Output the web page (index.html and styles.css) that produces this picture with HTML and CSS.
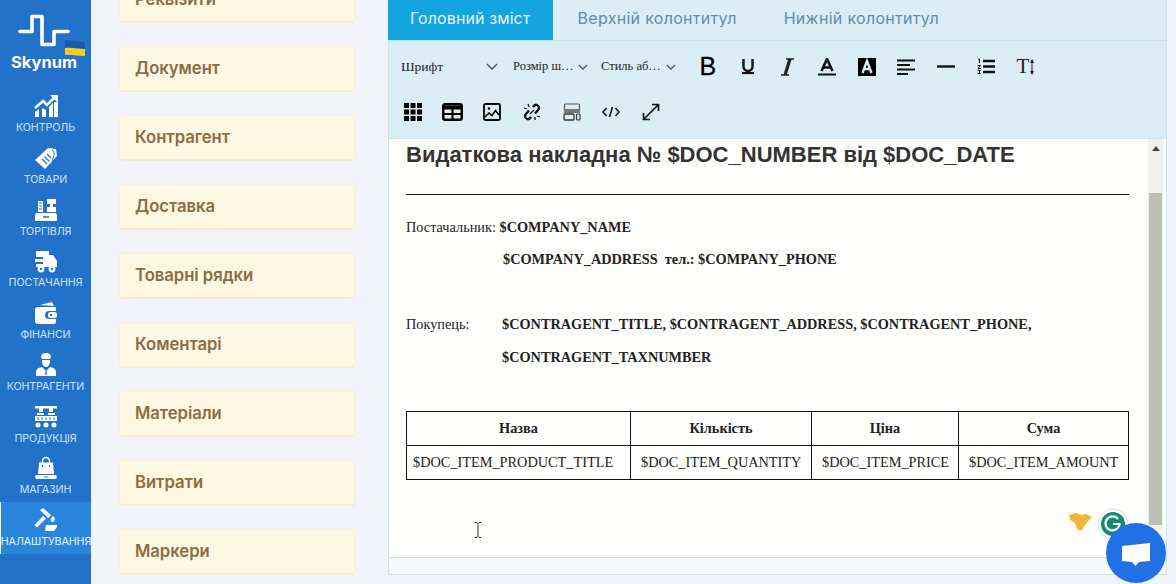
FILE: index.html
```html
<!DOCTYPE html>
<html lang="uk">
<head>
<meta charset="utf-8">
<title>Skynum</title>
<link rel="stylesheet" href="styles.css">
</head>
<body>
<div class="app">
  <nav class="sidebar">
    <div class="logo">
      <svg class="logo-mark" width="91" height="60" viewBox="0 0 91 60">
        <path d="M20 31.500H32V16.500H42V44.500H54V31.500H68" fill="none" stroke="#fff" stroke-width="3.600" stroke-linejoin="round" stroke-linecap="round"/>
        <path d="M65 41c6-1 13 1 20 1v7c-7 0-14-2-20-1z" fill="#1a5aa8"/>
        <path d="M65 48c6-1 13 1 20 1v7c-7 0-14-2-20-1z" fill="#f5d020"/>
      </svg>
      <span class="logo-text">Skynum</span>
    </div>
    <a class="nav-item">
      <svg width="26" height="24" viewBox="0 0 26 24" fill="#fff"><path d="M2 14 10 7l4 4 8-8" fill="none" stroke="#fff" stroke-width="2.600"/><path d="M17 1h8v8zM2 18l4-3v8H2zM9 14l4 2v7H9zM16 13l4-4v14h-4zM21 8h4v15h-4z"/></svg>
      <span>Контроль</span>
    </a>
    <a class="nav-item">
      <svg width="24" height="24" viewBox="0 0 24 24"><path d="M1 14 14 2l8 1 1 7-12 13z" fill="#fff"/><path d="M8 13l5 5M10.500 10.500l5 5M13 8l4 4" stroke="#2172c8" stroke-width="1.200"/><path d="M18 4q4 2 1 8l-1 8" fill="none" stroke="#2172c8" stroke-width="1"/></svg>
      <span>Товари</span>
    </a>
    <a class="nav-item">
      <svg width="24" height="24" viewBox="0 0 24 24" fill="#fff"><path d="M4 3h5v11H4zM13 1h9v5h-3v3h3v5h-9v-5h3V6h-3zM2 15h20l1 2v6H1v-6z"/><path d="M9 19h6" stroke="#2172c8" stroke-width="1.500"/><path d="M5 5h3M5 8h3M5 11h3" stroke="#2172c8"/></svg>
      <span>Торгівля</span>
    </a>
    <a class="nav-item">
      <svg width="24" height="24" viewBox="0 0 24 24" fill="#fff"><path d="M2 2h13v4h4l4 6v6H2v-3h7v-2H1v-3h8V8H2z"/><circle cx="7" cy="20" r="3.400"/><circle cx="18" cy="20" r="3.400"/><circle cx="7" cy="20" r="1.200" fill="#2172c8"/><circle cx="18" cy="20" r="1.200" fill="#2172c8"/></svg>
      <span>Постачання</span>
    </a>
    <a class="nav-item">
      <svg width="24" height="24" viewBox="0 0 24 24" fill="#fff"><path d="M6 4 18 1l2 4z"/><path d="M4 6h18v4h-7a4 4 0 0 0 0 8h7v3a2 2 0 0 1-2 2H4a3 3 0 0 1-3-3V9a3 3 0 0 1 3-3z"/><rect x="14" y="11" width="9" height="6" rx="2.500"/><circle cx="17" cy="14" r="1.200" fill="#2172c8"/></svg>
      <span>Фінанси</span>
    </a>
    <a class="nav-item">
      <svg width="24" height="24" viewBox="0 0 24 24" fill="#fff"><path d="M7 4q0-4 5-4t5 4l-1 2H8z"/><path d="M8 7h8v2q-1 5-4 5t-4-5z"/><path d="M2 23v-4q0-4 6-5l4 4 4-4q6 1 6 5v4z"/><path d="M12 18v4" stroke="#2172c8" stroke-width="1.400"/></svg>
      <span>Контрагенти</span>
    </a>
    <a class="nav-item">
      <svg width="24" height="24" viewBox="0 0 24 24" fill="#fff"><path d="M1 1h22v2.500H1zM5 3h4v4H5zM15 3h4v4h-4zM3 8h7v2H3zM14 8h7v2h-7zM1 11h22v5H1z"/><circle cx="4" cy="20" r="2.500"/><circle cx="12" cy="20" r="2.500"/><circle cx="20" cy="20" r="2.500"/><path d="M4 12v3M8 12v3M12 12v3M16 12v3M20 12v3" stroke="#2172c8"/></svg>
      <span>Продукція</span>
    </a>
    <a class="nav-item">
      <svg width="24" height="24" viewBox="0 0 24 24" fill="#fff"><path d="M8.500 8V5a3.500 3.500 0 0 1 7 0v3" fill="none" stroke="#fff" stroke-width="1.500"/><path d="M5 6.500h14l1 11.500H4z"/><path d="M2 19h20l1 2-1 2H2l-1-2z"/><path d="M10 21h4" stroke="#2172c8"/><path d="M8.500 9v2M15.500 9v2" stroke="#2172c8"/></svg>
      <span>Магазин</span>
    </a>
    <a class="nav-item active">
      <svg width="24" height="24" viewBox="0 0 24 24" fill="#fff"><path d="M6 2 9 0l8 7-3 3zM9 8l3 2.500-9 9-2.500-2.500z"/><path d="M19 8q3 3 1 5t-3 0 2-5zM12 17h11v2l-3 4h-9z"/></svg>
      <span>Налаштування</span>
    </a>
  </nav>

  <aside class="cards">
    <div class="card">Реквізити</div>
    <div class="card">Документ</div>
    <div class="card">Контрагент</div>
    <div class="card">Доставка</div>
    <div class="card">Товарні рядки</div>
    <div class="card">Коментарі</div>
    <div class="card">Матеріали</div>
    <div class="card">Витрати</div>
    <div class="card">Маркери</div>
  </aside>

  <main class="panel">
    <div class="tabs">
      <div class="tab tab-active">Головний зміст</div>
      <div class="tab">Верхній колонтитул</div>
      <div class="tab">Нижній колонтитул</div>
    </div>
    <div class="toolbar">
      <div class="tool-row">
        <div class="select select-wide"><span class="select-label">Шрифт</span><svg class="chev-big" viewBox="0 0 12 7"><path d="M1 1l5 5 5-5" fill="none" stroke="#445" stroke-width="1.300"/></svg></div>
        <div class="select"><span class="select-label">Розмір ш…</span><svg class="chev" viewBox="0 0 12 7"><path d="M1 1l5 5 5-5" fill="none" stroke="#445" stroke-width="1.500"/></svg></div>
        <div class="select select-last"><span class="select-label">Стиль аб…</span><svg class="chev" viewBox="0 0 12 7"><path d="M1 1l5 5 5-5" fill="none" stroke="#445" stroke-width="1.500"/></svg></div>
        <div class="tool glyph-b">B</div>
        <div class="tool"><svg width="14" height="17" viewBox="0 0 14 17"><path d="M2.500 1v7.500a4.500 4.500 0 0 0 9 0V1" fill="none" stroke="#111" stroke-width="2.400"/><path d="M1 15h12" stroke="#111" stroke-width="2.200"/></svg></div>
        <div class="tool"><svg width="13" height="18" viewBox="0 0 13 18"><path d="M5 1h8M0 17h8" stroke="#222" stroke-width="1.500" fill="none"/><path d="M9 1 4 17" stroke="#222" stroke-width="3.200"/></svg></div>
        <div class="tool"><svg width="18" height="18" viewBox="0 0 18 18"><path d="M3.500 13 9 1l5.500 12M5.500 9.500h7" fill="none" stroke="#111" stroke-width="2.600"/><path d="M0 16.500h18" stroke="#111" stroke-width="2"/></svg></div>
        <div class="tool"><svg width="18" height="18" viewBox="0 0 18 18"><rect width="18" height="18" fill="#000"/><path d="M4.500 15 9 3l4.500 12M6 11h6" fill="none" stroke="#dbeef5" stroke-width="2.400"/></svg></div>
        <div class="tool"><svg width="18" height="16" viewBox="0 0 18 16"><path d="M0 1.500h18M0 6h13M0 10.500h18M0 15h11" stroke="#111" stroke-width="2"/></svg></div>
        <div class="tool"><svg width="18" height="3" viewBox="0 0 18 3"><path d="M0 1.500h18" stroke="#111" stroke-width="2.400"/></svg></div>
        <div class="tool"><svg width="18" height="17" viewBox="0 0 18 17"><path d="M6 3h12M6 8.500h12M6 14h12" stroke="#111" stroke-width="2.400"/><path d="M1 1.500 2.500 1v4M.5 7.500h3L1 10.500h3M.5 12.500h3l-1.500 1.500 1.500 1.500H.5" fill="none" stroke="#111" stroke-width="1"/></svg></div>
        <div class="tool glyph-t">T<svg width="4" height="16" viewBox="0 0 4 16"><path d="M2 1v14" stroke="#222" stroke-width="1"/><path d="M0 4 2 0l2 4zM0 12l2 4 2-4z" fill="#222"/></svg></div>
      </div>
      <div class="tool-row">
        <div class="tool"><svg width="18" height="18" viewBox="0 0 18 18" fill="#000"><path d="M0 0h5v5H0zM6.500 0h5v5h-5zM13 0h5v5h-5zM0 6.500h5v5H0zM6.500 6.500h5v5h-5zM13 6.500h5v5h-5zM0 13h5v5H0zM6.500 13h5v5h-5zM13 13h5v5h-5z"/></svg></div>
        <div class="tool"><svg width="21" height="18" viewBox="0 0 21 18"><rect x="1.250" y="1.250" width="18.500" height="15.500" rx="2" fill="none" stroke="#000" stroke-width="2.500"/><path d="M1 4.500h19" stroke="#000" stroke-width="4"/><path d="M1 11h19M10.500 5v12" stroke="#000" stroke-width="2.200"/></svg></div>
        <div class="tool"><svg width="18" height="18" viewBox="0 0 18 18" fill="none" stroke="#000"><rect x="1" y="1" width="16" height="16" rx="1.500" stroke-width="1.800"/><path d="M2 14l4-4 3 2.500 3.500-5L16 12" stroke-width="1.600"/><circle cx="6" cy="5.500" r="1.300" fill="#000" stroke="none"/></svg></div>
        <div class="tool"><svg width="18" height="18" viewBox="0 0 18 18"><path d="M10 4q2-3 4-2t2 3q0 1-1 2l-3 3.500M8 14q-2 3-4 2t-2-3q0-1 1-2l3-3.500" fill="none" stroke="#111" stroke-width="2.300"/><path d="M7 11l4-4M1 5l3 1M5 1l1 3M14 13l3 1M12 14v3" stroke="#111" stroke-width="1.300"/></svg></div>
        <div class="tool"><svg width="18" height="18" viewBox="0 0 18 18"><path d="M1.500 8V2q0-1 1-1h13q1 0 1 1v6" fill="none" stroke="#555" stroke-width="1.200"/><rect x="1" y="6" width="16" height="4" fill="#777"/><rect x="1" y="11" width="10" height="6" rx="1" fill="none" stroke="#333" stroke-width="1.300"/><rect x="13.500" y="11" width="3.500" height="6" rx="1" fill="none" stroke="#333" stroke-width="1.200"/></svg></div>
        <div class="tool"><svg width="18" height="12" viewBox="0 0 18 12"><path d="M4.500 2 1 6l3.500 4M13.500 2 17 6l-3.500 4M10.500 1l-3 10" fill="none" stroke="#111" stroke-width="1.600"/></svg></div>
        <div class="tool"><svg width="18" height="18" viewBox="0 0 18 18"><path d="M2 16 16 2M10 1.500h6.500V8M1.500 10v6.500H8" fill="none" stroke="#111" stroke-width="1.700"/></svg></div>
      </div>
    </div>
    <div class="editor">
      <div class="doc">
        <h1 class="doc-title">Видаткова накладна № $DOC_NUMBER від $DOC_DATE</h1>
        <hr class="doc-rule">
        <p class="line line-first">Постачальник: <b>$COMPANY_NAME</b></p>
        <p class="line line-indent"><b>$COMPANY_ADDRESS&nbsp; тел.: $COMPANY_PHONE</b></p>
        <div class="buyer">
          <span class="buyer-label">Покупець:</span>
          <b>$CONTRAGENT_TITLE, $CONTRAGENT_ADDRESS, $CONTRAGENT_PHONE, $CONTRAGENT_TAXNUMBER</b>
        </div>
        <table class="items">
          <colgroup><col class="c1"><col class="c2"><col class="c3"><col class="c4"></colgroup>
          <tr><th>Назва</th><th>Кількість</th><th>Ціна</th><th>Сума</th></tr>
          <tr><td>$DOC_ITEM_PRODUCT_TITLE</td><td>$DOC_ITEM_QUANTITY</td><td>$DOC_ITEM_PRICE</td><td>$DOC_ITEM_AMOUNT</td></tr>
        </table>
      </div>
      <div class="scrollbar">
        <svg class="scroll-arrow" width="8" height="5" viewBox="0 0 8 5"><path d="M0 5 4 0l4 5z" fill="#444"/></svg>
        <div class="scroll-thumb"></div>
      </div>
      <svg class="ibeam" width="8" height="16" viewBox="0 0 8 16"><path d="M1 .5h2l1 1 1-1h2M1 15.500h2l1-1 1 1h2M4 1.500v13" fill="none" stroke="#222"/></svg>
      <svg class="hand" width="24" height="18" viewBox="0 0 24 18"><path d="M1 2 8 0q3 1 5 2l5-1 6 3-3 3-4 5-3 5q-3 1-5-1L7 10 2 7z" fill="#efb63a"/></svg>
      <svg class="grammarly" width="32" height="32" viewBox="0 0 32 32"><circle cx="16" cy="16" r="15" fill="#fff" stroke="#ddd"/><circle cx="16" cy="16" r="12" fill="#138a72"/><path d="M21 11a7 7 0 1 0 1.500 5H16" fill="none" stroke="#fff" stroke-width="2.200"/></svg>
    </div>
    <div class="status"></div>
  </main>
</div>
<div class="chat">
  <svg width="30" height="26" viewBox="0 0 30 26"><path d="M1 4 29 1v18l-11 1-3.500 4L11 20l-10-1z" fill="#fff"/></svg>
</div>
</body>
</html>
```
FILE: styles.css
```css
* { box-sizing: border-box; }
html, body { margin: 0; height: 100%; overflow: hidden; }
body { background: #f2f4f9; font-family: "Inter", "Noto Sans", sans-serif; }
.app { display: flex; height: 584px; align-items: flex-start; }

.sidebar { width: 91px; height: 584px; background: #2172c8; flex: none; display: flex; flex-direction: column; }
.logo { height: 88px; position: relative; flex: none; display: flex; justify-content: center; padding-right: 3px; }
.logo-mark { position: absolute; left: 0; top: 0; }
.logo-text { margin-top: 52px; font: 700 16.500px/20px "Inter", sans-serif; color: #fff; }
.nav-item { height: 51.750px; flex: none; display: flex; flex-direction: column; align-items: center; padding-top: 6px; color: #cfe4f7; font-size: 10.700px; line-height: 14px; text-transform: uppercase; white-space: nowrap; letter-spacing: -0.1px; }
.nav-item svg { flex: none; margin-bottom: 3px; }
.nav-item.active { background: #2a86dc; border-left: 1px solid #fff; color: #e8f3fc; }

.cards { width: 236px; flex: none; margin: -23px 33px 0 28px; display: flex; flex-direction: column; gap: 23px; }
.card { height: 46px; background: #fdf8e1; border: 1px solid #faf0d8; border-bottom: 2px solid #f8ebd2; border-radius: 3px; padding: 0 15px; font-size: 16.700px; font-weight: 600; color: #8a6d47; line-height: 42px; letter-spacing: -0.05px; }

.panel { width: 779px; height: 575px; flex: none; background: #dbeef5; border: 1px solid #c9e6ee; border-top: 0; display: flex; flex-direction: column; }
.tabs { height: 41px; flex: none; display: flex; border-bottom: 1px solid #c6e6ec; margin-left: -1px; }
.tab { height: 40px; padding: 0 23.500px; font-size: 16px; letter-spacing: 0.3px; line-height: 36px; color: #5f8cab; white-space: nowrap; }
.tab-active { width: 165px; background: #12a5df; color: #e6f6fc; padding: 0 0 0 22px; margin-right: 1px; letter-spacing: 0.1px; }
.toolbar { height: 98px; flex: none; padding: 3px 0 0 4px; border-bottom: 1px solid #cbe3ec; }
.tool-row { height: 45px; display: flex; align-items: center; }
.select { width: 88px; height: 30px; display: flex; align-items: center; justify-content: space-between; padding: 0 5px 0 8px; font: 12.500px "Liberation Serif", serif; color: #222; }
.select-wide { width: 112px; padding-right: 7px; font-size: 13.500px; }
.select-last { margin-right: 7px; }
.select-label { white-space: nowrap; }
.chev { width: 10px; height: 6px; flex: none; }
.chev-big { width: 12px; height: 7px; flex: none; }
.tool { width: 39.700px; height: 34px; display: flex; align-items: center; justify-content: center; flex: none; }
.glyph-b { font: 400 25px "Liberation Sans", sans-serif; color: #000; -webkit-text-stroke: 0.3px #000; }
.glyph-t { font: 21px "Liberation Serif", serif; color: #222; gap: 1px; }

.editor { height: 419px; flex: none; position: relative; display: flex; background: #fffffd; border-bottom: 1px solid #d8dcd8; }
.doc { width: 759px; flex: none; padding: 0 19px 0 17px; color: #222; font: 14.300px "Liberation Serif", serif; }
.doc-title { margin: 0; padding-top: 3px; font: 700 22px/26px "Liberation Sans", sans-serif; color: #333; white-space: nowrap; }
.doc-rule { margin: 26px 0 0; border: 0; border-top: 1px solid #111; }
.line { margin: 0; line-height: 32px; }
.line-first { margin-top: 16px; }
.line-indent { padding-left: 97px; }
.buyer { margin-top: 33px; display: flex; line-height: 32.500px; }
.buyer-label { width: 96px; flex: none; }
.items { width: 723px; margin-top: 38px; border-collapse: collapse; table-layout: fixed; }
.items th, .items td { border: 1px solid #111; height: 34px; padding: 0 0 0 10px; font-size: 14.300px; white-space: nowrap; }
.items th { text-align: center; padding: 0; }
.items td { text-align: left; }
.items td:first-child { padding-left: 6px; }
.c1 { width: 224px; }
.c2 { width: 181px; }
.c3 { width: 147px; }
.c4 { width: 170px; }
.scrollbar { width: 15px; flex: none; background: #f0f0ee; display: flex; flex-direction: column; align-items: center; padding-top: 7px; }
.scroll-arrow { flex: none; margin-bottom: 42px; }
.scroll-thumb { width: 13px; height: 332px; background: #bfbfba; }
.ibeam { position: absolute; left: 85px; top: 383px; }
.hand { position: absolute; left: 679px; top: 374px; }
.grammarly { position: absolute; left: 708px; top: 369px; }
.status { flex: 1; background: #f4f9fa; }

.chat { position: fixed; left: 1106px; top: 523px; width: 60px; height: 60px; border-radius: 50%; background: #2170e6; display: flex; align-items: center; justify-content: center; padding-top: 3px; }
```
